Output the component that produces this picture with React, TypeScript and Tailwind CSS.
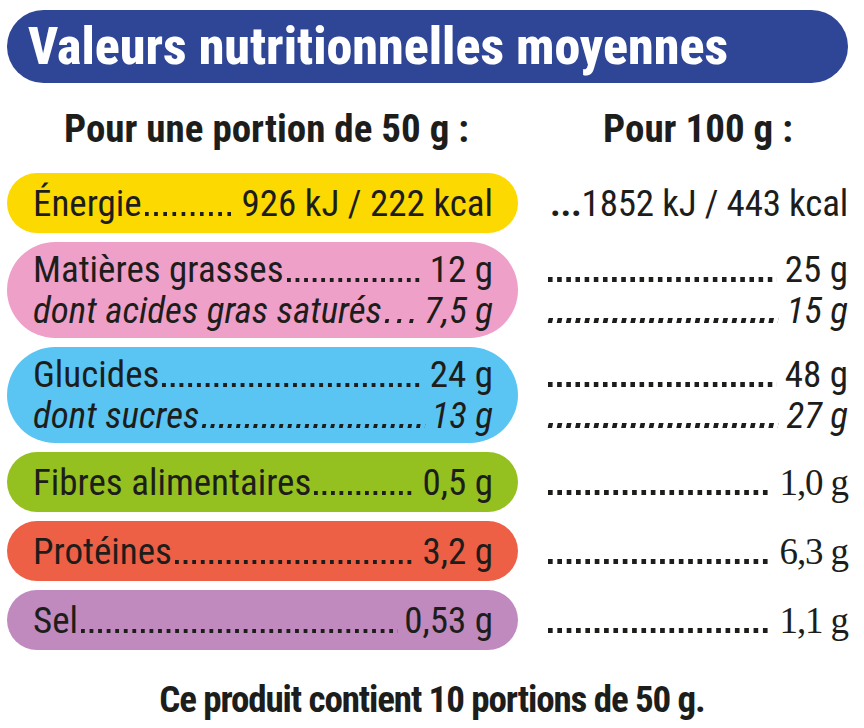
// dotted leader drawn as a repeating background; repeat-space keeps only whole dots
function Leader({ italic, heavy }: { italic?: boolean; heavy?: boolean }) {
  return (
    <span
      className={
        "mx-[3px] min-w-0 flex-1 bg-repeat-space " +
        (heavy
          ? "h-[5px] bg-[linear-gradient(90deg,#1d1d1b_0_5px,transparent_5px)] bg-[length:9px_5px]"
          : "h-[4px] bg-[linear-gradient(90deg,#1d1d1b_0_4px,transparent_4px)] bg-[length:8.5px_4px]") +
        (italic ? " -skew-x-12" : "")
      }
    />
  );
}

function Line({ label, value, italic }: { label: string; value: string; italic?: boolean }) {
  return (
    <div className={"flex items-baseline leading-[41px]" + (italic ? " italic" : "")}>
      <span className="whitespace-nowrap">{label}</span>
      <Leader italic={italic} />
      <span className="ml-[3px] whitespace-nowrap">{value}</span>
    </div>
  );
}

function Right({ value, italic, serif }: { value: string; italic?: boolean; serif?: boolean }) {
  return (
    <div className="flex items-baseline leading-[41px]">
      <span className="-ml-[3px] flex min-w-0 flex-1 items-baseline">
        <Leader italic={italic} heavy />
      </span>
      <span
        className={
          "ml-[5px] whitespace-nowrap" +
          (italic ? " italic" : "") +
          (serif ? " font-['Liberation_Serif',serif] text-[37px] tracking-[-0.03em]" : "")
        }
      >
        {value}
      </span>
    </div>
  );
}

export default function App() {
  return (
    <div className="h-[728px] w-[864px] overflow-hidden bg-white font-['Roboto_Condensed',sans-serif] text-[#1d1d1b]">
      <div className="ml-[7px] mt-[10px] flex h-[73px] w-[841px] items-center rounded-full bg-[#2f4596] pl-[21px]">
        <h1 className="text-[52px] font-extrabold leading-none text-white">Valeurs nutritionnelles moyennes</h1>
      </div>

      <div className="ml-[7px] mt-[22px] grid grid-cols-[511px_300px] gap-x-[30px] text-[39px] font-bold leading-[48px]">
        <div className="pl-[8px] text-center">Pour une portion de 50 g :</div>
        <div className="text-center">Pour 100 g :</div>
      </div>

      <div className="ml-[7px] mt-[20px] grid grid-cols-[511px_300px] gap-x-[30px] gap-y-[9px] text-[37px]">
        <div className="flex h-[60px] flex-col justify-center rounded-full bg-[#fcd900] pl-[26px] pr-[25px]">
          <Line label="Énergie" value="926 kJ / 222 kcal" />
        </div>
        <div className="flex h-[60px] flex-col justify-center">
          <div className="whitespace-nowrap text-right leading-[41px] tracking-[-0.005em]">
            <span className="font-bold">...</span>1852 kJ / 443 kcal
          </div>
        </div>

        <div className="flex h-[96px] flex-col justify-center rounded-[48px] bg-[#eea0c8] pl-[26px] pr-[25px]">
          <Line label="Matières grasses" value="12 g" />
          <Line label="dont acides gras saturés" value="7,5 g" italic />
        </div>
        <div className="flex h-[96px] flex-col justify-center">
          <Right value="25 g" />
          <Right value="15 g" italic />
        </div>

        <div className="flex h-[96px] flex-col justify-center rounded-[48px] bg-[#5ac5f2] pl-[26px] pr-[25px]">
          <Line label="Glucides" value="24 g" />
          <Line label="dont sucres" value="13 g" italic />
        </div>
        <div className="flex h-[96px] flex-col justify-center">
          <Right value="48 g" />
          <Right value="27 g" italic />
        </div>

        <div className="flex h-[60px] flex-col justify-center rounded-full bg-[#94c120] pl-[26px] pr-[25px]">
          <Line label="Fibres alimentaires" value="0,5 g" />
        </div>
        <div className="flex h-[60px] flex-col justify-center">
          <Right value="1,0 g" serif />
        </div>

        <div className="flex h-[60px] flex-col justify-center rounded-full bg-[#ee6045] pl-[26px] pr-[25px]">
          <Line label="Protéines" value="3,2 g" />
        </div>
        <div className="flex h-[60px] flex-col justify-center">
          <Right value="6,3 g" serif />
        </div>

        <div className="flex h-[60px] flex-col justify-center rounded-full bg-[#c08abf] pl-[26px] pr-[25px]">
          <Line label="Sel" value="0,53 g" />
        </div>
        <div className="flex h-[60px] flex-col justify-center">
          <Right value="1,1 g" serif />
        </div>
      </div>

      <p className="mt-[26px] text-center text-[37px] font-bold leading-[48px] tracking-[-0.03em]">
        Ce produit contient 10 portions de 50 g.
      </p>
    </div>
  );
}
